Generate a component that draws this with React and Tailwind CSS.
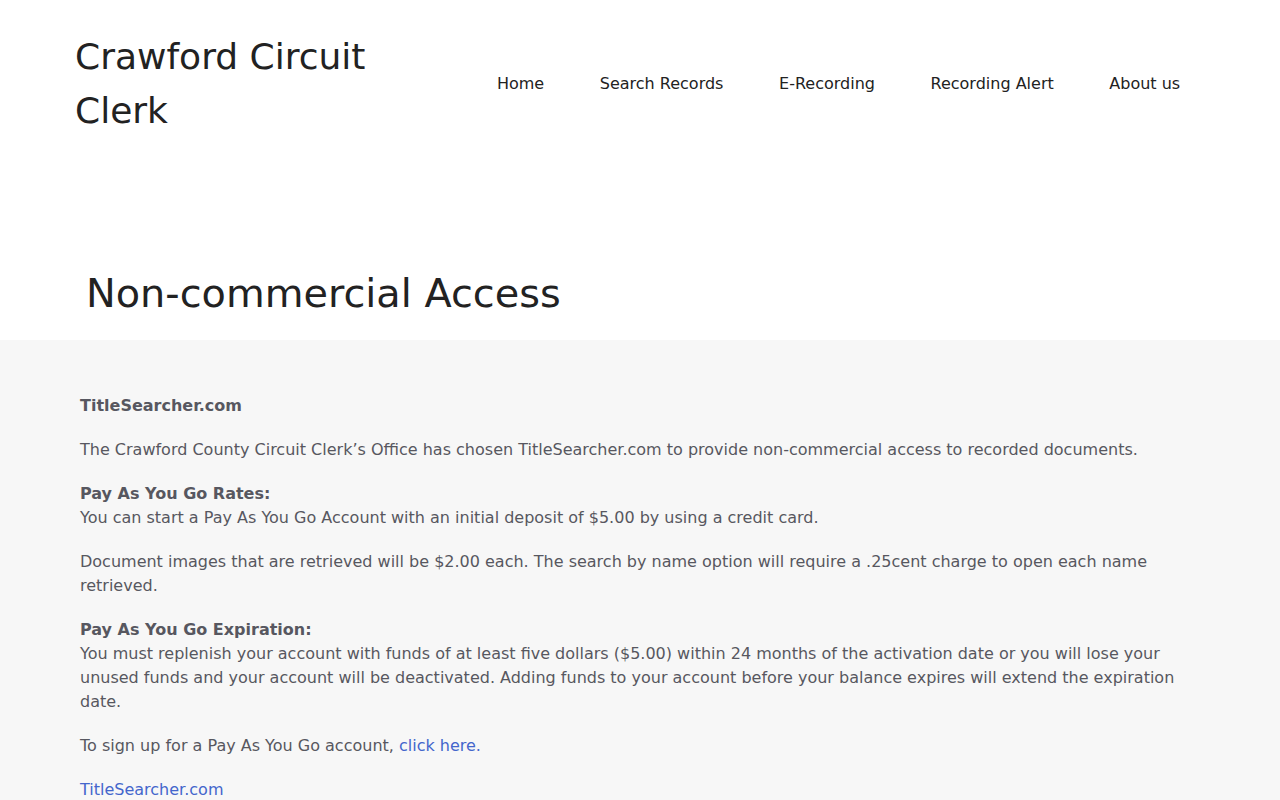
export default function App() {
  const nav = ["Home", "Search Records", "E-Recording", "Recording Alert", "About us"];
  return (
    <div className="min-h-screen bg-[#f7f7f7] text-[#575760]" style={{ fontFamily: '"DejaVu Sans", sans-serif' }}>
      <header className="bg-white">
        <div className="mx-auto flex w-[1200px] items-center justify-between px-[40px] pt-[30px] pb-[19px]">
          <div className="w-[330px] text-[36px] leading-[54px] text-[#222222] -ml-[5px]">Crawford Circuit Clerk</div>
          <nav className="flex -mr-[8px]">
            {nav.map((n) => (
              <a key={n} className="px-[27.8px] text-[16px] leading-[60px] text-[#222222]">{n}</a>
            ))}
          </nav>
        </div>
        <div className="mx-auto w-[1200px] px-[46px] pt-[105px] pb-[16px]">
          <h1 className="text-[39.8px] leading-[62px] text-[#222222]">Non-commercial Access</h1>
        </div>
      </header>
      <main className="mx-auto w-[1200px] px-[40px] pt-[54px] text-[16px] leading-[24px]">
        <p className="mb-[20px] font-bold">TitleSearcher.com</p>
        <p className="mb-[20px]">The Crawford County Circuit Clerk’s Office has chosen TitleSearcher.com to provide non-commercial access to recorded documents.</p>
        <p className="mb-[20px]"><strong>Pay As You Go Rates:</strong><br />You can start a Pay As You Go Account with an initial deposit of $5.00 by using a credit card.</p>
        <p className="mb-[20px]">Document images that are retrieved will be $2.00 each. The search by name option will require a .25cent charge to open each name retrieved.</p>
        <p className="mb-[20px]"><strong>Pay As You Go Expiration:</strong><br />You must replenish your account with funds of at least five dollars ($5.00) within 24 months of the activation date or you will lose your unused funds and your account will be deactivated. Adding funds to your account before your balance expires will extend the expiration date.</p>
        <p className="mb-[20px]">To sign up for a Pay As You Go account, <a className="text-[#4466cc]">click here.</a></p>
        <p className="mb-[20px]"><a className="text-[#4466cc]">TitleSearcher.com</a></p>
      </main>
    </div>
  );
}
